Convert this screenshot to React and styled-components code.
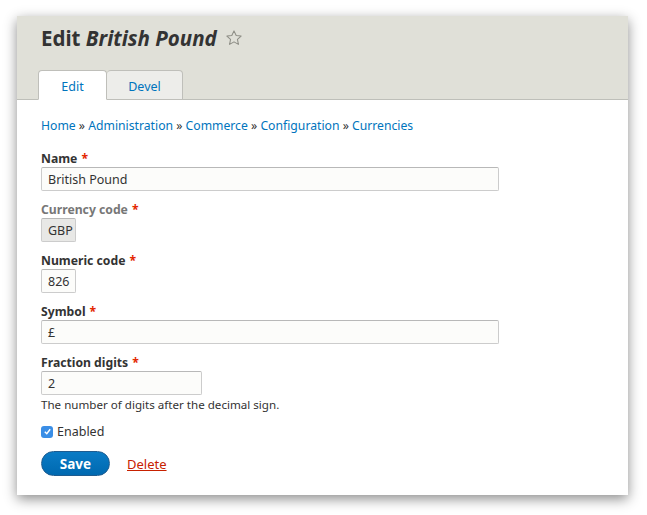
import React from "react";
import styled, { createGlobalStyle } from "styled-components";

const GlobalStyle = createGlobalStyle`
    body {
        margin: 0;
        background: #ffffff;
        font-family: "Noto Sans", "Lucida Grande", Verdana, sans-serif;
        color: #333333;
    }
`;

const Page = styled.div`
    padding: 16px 19px 20px 17px;
`;

const Window = styled.div`
    width: 611px;
    height: 479px;
    background: #ffffff;
    box-shadow: 0 4px 12px rgba(0, 0, 0, 0.45);
    display: flex;
    flex-direction: column;
`;

const Header = styled.div`
    background: #e0e0d8;
    border-bottom: 1px solid #bebfb9;
    height: 84px;
    box-sizing: border-box;
    padding: 9px 0 0 24px;
    display: flex;
    flex-direction: column;
    justify-content: space-between;
`;

const Title = styled.h1`
    margin: 0;
    font-size: 20.5px;
    font-weight: bold;
    color: #333333;
    display: flex;
    align-items: center;
    gap: 8px;
    line-height: 26px;

    em {
        font-style: italic;
    }
`;

const Tabs = styled.div`
    display: flex;
    margin-left: -3px;
    margin-bottom: -1px;
`;

const Tab = styled.a`
    width: ${(p) => p.$width}px;
    height: 30px;
    box-sizing: border-box;
    padding-top: 2px;
    display: flex;
    align-items: center;
    justify-content: center;
    font-size: 12.5px;
    color: #0074bd;
    text-decoration: none;
    border: 1px solid #bfbfba;
    border-bottom: ${(p) => (p.$active ? "1px solid #ffffff" : "1px solid #bfbfba")};
    border-radius: 4px 4px 0 0;
    background: ${(p) => (p.$active ? "#ffffff" : "#ededea")};
    & + & {
        border-left: none;
    }
`;

const Content = styled.div`
    padding: 18px 24px 0;
`;

const Breadcrumb = styled.div`
    font-size: 12.2px;
    line-height: 16px;
    color: #333333;
    margin-bottom: 14px;

    a {
        color: #0074bd;
        text-decoration: none;
    }
`;

const FormItem = styled.div`
    margin-bottom: 8px;
`;

const Label = styled.div`
    font-size: 12.2px;
    font-weight: bold;
    line-height: 18px;
    padding-top: 2px;
    margin-bottom: -1px;
    color: ${(p) => (p.$disabled ? "#777777" : "#333333")};
`;

const Required = styled.span`
    color: #e32700;
    margin-left: 4px;
`;

const Input = styled.div`
    width: ${(p) => p.$width}px;
    height: 24px;
    box-sizing: border-box;
    border: 1px solid #cccccc;
    border-top-color: #b8b8b8;
    border-radius: 2px;
    background: ${(p) => (p.$disabled ? "#e8e8e6" : "#fcfcfa")};
    padding: 0 6px;
    display: flex;
    align-items: center;
    font-size: 12.5px;
    color: #333333;
`;

const Description = styled.div`
    font-size: 11.6px;
    line-height: 16px;
    color: #333333;
    margin-top: 2px;
`;

const CheckRow = styled.label`
    display: flex;
    align-items: center;
    gap: 4px;
    font-size: 12.5px;
    margin-top: 10px;
`;

const CheckBox = styled.span`
    width: 12px;
    height: 12px;
    border-radius: 3px;
    background: #3a8ee6;
    display: flex;
    align-items: center;
    justify-content: center;
`;

const Actions = styled.div`
    display: flex;
    align-items: center;
    gap: 17px;
    margin-top: 11px;
`;

const SaveButton = styled.button`
    width: 69px;
    height: 25px;
    border-radius: 13px;
    border: 1px solid #1e5c90;
    background: linear-gradient(#0a7bc5, #0069b0);
    color: #ffffff;
    font-family: inherit;
    font-weight: bold;
    font-size: 13.5px;
    padding: 0;
`;

const DeleteLink = styled.a`
    color: #c72100;
    font-size: 13px;
    text-decoration: underline;
`;

const Star = () => (
    <svg width="18" height="18" viewBox="0 0 24 24" fill="none" stroke="#8e8e86" strokeWidth="1.4" strokeLinejoin="round">
        <polygon points="12,2.5 14.9,8.6 21.5,9.4 16.6,13.9 17.9,20.5 12,17.2 6.1,20.5 7.4,13.9 2.5,9.4 9.1,8.6" />
    </svg>
);

const fields = [
    { label: "Name", value: "British Pound", width: 458 },
    { label: "Currency code", value: "GBP", width: 35, disabled: true },
    { label: "Numeric code", value: "826", width: 35 },
    { label: "Symbol", value: "£", width: 458 },
    { label: "Fraction digits", value: "2", width: 161 },
];

const App = () => {
    return (
        <Page>
            <GlobalStyle />
            <Window>
                <Header>
                    <Title>
                        <span>
                            Edit <em>British Pound</em>
                        </span>
                        <Star />
                    </Title>
                    <Tabs>
                        <Tab $active $width={69}>Edit</Tab>
                        <Tab $width={76}>Devel</Tab>
                    </Tabs>
                </Header>
                <Content>
                    <Breadcrumb>
                        <a href="#">Home</a> » <a href="#">Administration</a> »{" "}
                        <a href="#">Commerce</a> » <a href="#">Configuration</a> »{" "}
                        <a href="#">Currencies</a>
                    </Breadcrumb>
                    {fields.map((f) => (
                        <FormItem key={f.label}>
                            <Label $disabled={f.disabled}>
                                {f.label}
                                <Required>*</Required>
                            </Label>
                            <Input $width={f.width} $disabled={f.disabled}>
                                {f.value}
                            </Input>
                            {f.label === "Fraction digits" && (
                                <Description>The number of digits after the decimal sign.</Description>
                            )}
                        </FormItem>
                    ))}
                    <CheckRow>
                        <CheckBox>
                            <svg width="9" height="9" viewBox="0 0 10 10">
                                <path d="M2 5.2 L4.2 7.5 L8 2.5" stroke="#fff" strokeWidth="1.6" fill="none" />
                            </svg>
                        </CheckBox>
                        Enabled
                    </CheckRow>
                    <Actions>
                        <SaveButton>Save</SaveButton>
                        <DeleteLink href="#">Delete</DeleteLink>
                    </Actions>
                </Content>
            </Window>
        </Page>
    );
};

export default App;
